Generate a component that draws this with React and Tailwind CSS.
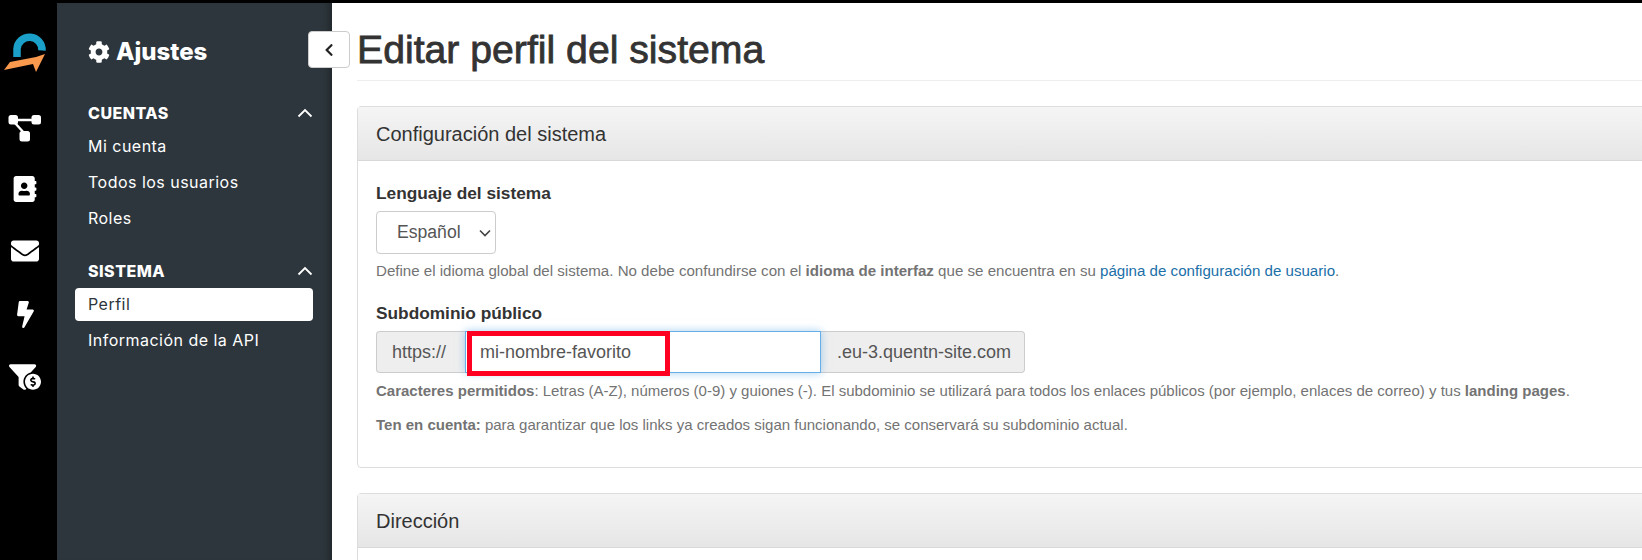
import React from 'react';
import { FaAddressBook, FaBolt, FaChevronLeft, FaCog, FaEnvelope, FaFunnelDollar } from 'react-icons/fa';

function Logo() {
  return (
    <svg width="50" height="50" viewBox="0 0 50 50" fill="none">
      <path d="M17 27 V19 A12.5 12.5 0 0 1 42 20.5" stroke="#1ba1c9" strokeWidth="7.5" />
      <path d="M4 40 L10 32 L36 27 L45 24 L36 42 L33 34 Z" fill="#f9994e" />
    </svg>
  );
}

function FlowIcon() {
  return (
    <svg width="36" height="30" viewBox="0 0 36 30" fill="white">
      <path d="M10 5 H30 M8 8 L18 19" stroke="white" strokeWidth="2.4" />
      <rect x="1.5" y="0" width="9.5" height="9.5" rx="2.5" />
      <rect x="24.5" y="0" width="9.5" height="9.5" rx="2.5" />
      <rect x="12.5" y="16" width="10.5" height="10.5" rx="2.5" />
    </svg>
  );
}

function Chevron() {
  return (
    <svg width="16" height="10" viewBox="0 0 16 10" fill="none" className="shrink-0">
      <path d="M1.5 8.5 L8 2 L14.5 8.5" stroke="white" strokeWidth="1.8" />
    </svg>
  );
}

function SideLink({ active, children }) {
  return (
    <a className={active ? 'mb-[1px] block h-[33px] rounded bg-white pl-[13px] leading-[32px] text-[#2d363c]' : 'block h-[36px] pl-[13px] leading-[36px] text-white'}>
      {children}
    </a>
  );
}

function SideSection({ title, children }) {
  return (
    <div>
      <div className="flex h-[24px] items-center justify-between pl-[13px] font-extrabold text-white">
        <span>{title}</span>
        <Chevron />
      </div>
      {children}
    </div>
  );
}

function PanelHeader({ children }) {
  return (
    <div className="flex h-[54px] items-center border-b border-[#d8d8d8] bg-gradient-to-b from-[#f5f5f5] to-[#e6e6e6] px-[18px] pt-[1px] text-[20px] text-[#333]">
      {children}
    </div>
  );
}

export default function App() {
  return (
    <div className="flex h-[560px] overflow-hidden border-t-[3px] border-black bg-white font-['Liberation_Sans',sans-serif]">
      {/* Icon rail */}
      <nav className="flex w-[57px] shrink-0 flex-col items-center bg-black pr-[7px] text-white">
        <div className="mt-[27px] h-[50px] w-[50px]"><Logo /></div>
        <div className="mt-[35px]"><FlowIcon /></div>
        <FaAddressBook className="mt-[31px] text-[26px]" />
        <FaEnvelope className="mt-[35px] text-[28px]" />
        <FaBolt className="mt-[36px] text-[27px]" />
        <FaFunnelDollar className="mt-[33px] text-[32px]" />
      </nav>

      {/* Settings menu */}
      <aside className="relative w-[275px] shrink-0 bg-[#2d363c] pl-[18px] pr-[19px] font-['Inter',sans-serif] text-[16px] tracking-[0.03em] shadow-[inset_-10px_0_8px_-8px_rgba(0,0,0,0.35)]">
        <div className="mt-[31px] flex items-center gap-[6px] pl-[13px] text-[24px] font-extrabold tracking-normal text-white">
          <FaCog className="text-[22px]" />
          <span>Ajustes</span>
        </div>
        <div className="mt-[31px]">
          <SideSection title="CUENTAS">
            <div className="mt-[3px]">
              <SideLink>Mi cuenta</SideLink>
              <SideLink>Todos los usuarios</SideLink>
              <SideLink>Roles</SideLink>
            </div>
          </SideSection>
        </div>
        <div className="mt-[23px]">
          <SideSection title="SISTEMA">
            <div className="mt-[5px]">
              <SideLink active>Perfil</SideLink>
              <SideLink>Información de la API</SideLink>
            </div>
          </SideSection>
        </div>
        <button className="absolute left-[251px] top-[28px] flex h-[37px] w-[42px] items-center justify-center rounded border border-[#ccc] bg-white text-[#222]">
          <FaChevronLeft className="text-[14px]" />
        </button>
      </aside>

      {/* Main content */}
      <main className="flex-1 overflow-hidden pl-[25px]">
        <div className="w-[1400px]">
          <div className="h-[78px] border-b border-[#eee]">
            <h1 className="pt-[24px] text-[39.2px] leading-[46px] text-[#333] [-webkit-text-stroke:0.8px_#333]">Editar perfil del sistema</h1>
          </div>

          <section className="mt-[25px] h-[362px] rounded border border-[#ddd]">
            <PanelHeader>Configuración del sistema</PanelHeader>
            <div className="px-[18px] pt-[22px]">
              <label className="block text-[17.3px] font-bold leading-[20px] text-[#333]">Lenguaje del sistema</label>
              <div className="relative mt-[8px] h-[43px] w-[120px]">
                <select defaultValue="es" className="h-full w-full appearance-none rounded border border-[#ccc] bg-white pl-[20px] text-[17.6px] text-[#555]">
                  <option value="es">Español</option>
                </select>
                <svg width="12" height="8" viewBox="0 0 12 8" fill="none" className="pointer-events-none absolute right-[5px] top-[18px]">
                  <path d="M1 1.5 L6 6.5 L11 1.5" stroke="#444" strokeWidth="1.6" />
                </svg>
              </div>
              <p className="mt-[7px] text-[15.1px] leading-[20px] text-[#737373]">
                Define el idioma global del sistema. No debe confundirse con el <b>idioma de interfaz</b> que se encuentra en su <a className="text-[#1a6fa8]">página de configuración de usuario</a>.
              </p>

              <label className="mt-[22px] block text-[17.3px] font-bold leading-[20px] text-[#333]">Subdominio público</label>
              <div className="mt-[8px] flex h-[42px] text-[18px] text-[#555]">
                <span className="flex w-[89px] items-center rounded-l border border-r-0 border-[#ccc] bg-[#eee] pl-[15px]">https://</span>
                <div className="relative w-[356px]">
                  <input
                    defaultValue="mi-nombre-favorito"
                    className="h-full w-full border border-[#66afe9] pl-[14px] text-[#555] shadow-[0_0_8px_rgba(102,175,233,0.6)] outline-none"
                  />
                  <div className="absolute left-[2px] top-0 h-[45px] w-[203px] border-[5px] border-[#ff0022]"></div>
                </div>
                <span className="flex w-[204px] items-center rounded-r border border-l-0 border-[#ccc] bg-[#eee] pl-[16px]">.eu-3.quentn-site.com</span>
              </div>
              <p className="mt-[8px] text-[15px] leading-[20px] text-[#737373]">
                <b>Caracteres permitidos</b>: Letras (A-Z), números (0-9) y guiones (-). El subdominio se utilizará para todos los enlaces públicos (por ejemplo, enlaces de correo) y tus <b>landing pages</b>.
              </p>
              <p className="mt-[14px] text-[15px] leading-[20px] text-[#737373]">
                <b>Ten en cuenta:</b> para garantizar que los links ya creados sigan funcionando, se conservará su subdominio actual.
              </p>
            </div>
          </section>

          <section className="mt-[25px] rounded border border-[#ddd]">
            <PanelHeader>Dirección</PanelHeader>
            <div className="h-[40px]"></div>
          </section>
        </div>
      </main>
    </div>
  );
}
